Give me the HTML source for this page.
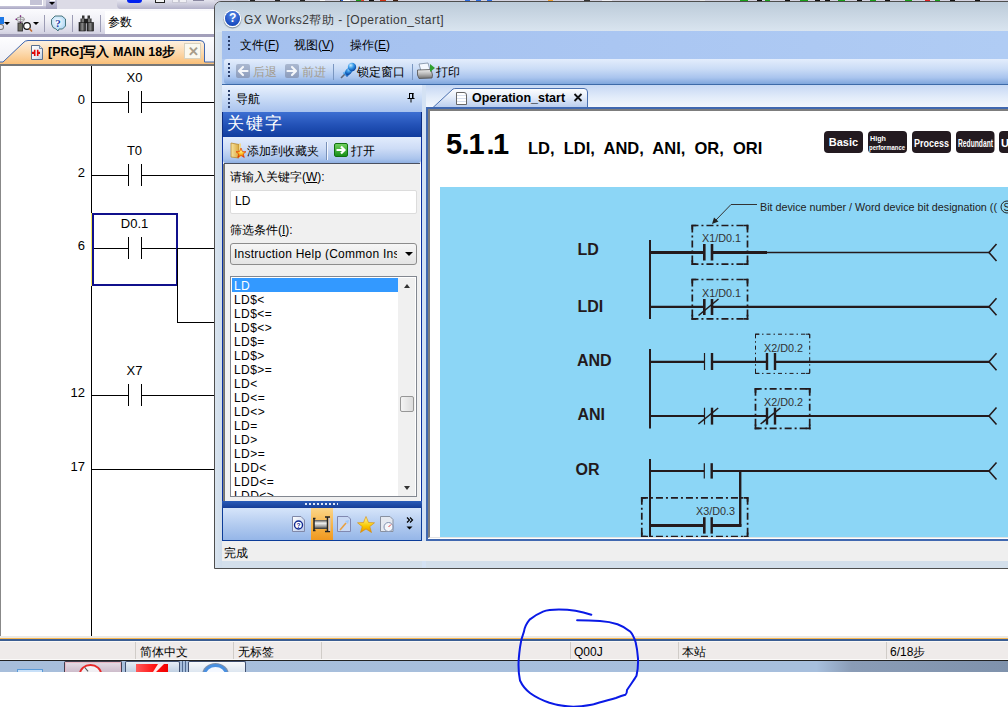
<!DOCTYPE html>
<html><head><meta charset="utf-8">
<style>
*{box-sizing:border-box;margin:0;padding:0}
html,body{width:1008px;height:707px;overflow:hidden;background:#fff;font-family:"Liberation Sans",sans-serif;font-size:12px;color:#000}
.a{position:absolute}
.t{position:absolute;white-space:nowrap;line-height:1}
</style></head><body>
<!-- ===== MAIN APP ===== -->
<!-- top toolbar row -->
<div class="a" style="left:0;top:0;width:1008px;height:9px;background:#dcdbe6"></div>
<div class="a" style="left:0;top:0;width:43px;height:6px;background:#fff"></div>
<div class="a" style="left:30px;top:0;width:12px;height:5px;background:#c4c3d6"></div>
<div class="a" style="left:0;top:6px;width:57px;height:3px;background:linear-gradient(#c8c6da,#a8a6c2)"></div>
<div class="a" style="left:46px;top:0;width:11px;height:8.5px;background:linear-gradient(#c9c8dc,#a09eba)"></div>
<div class="a" style="left:50px;top:0;width:5px;height:1px;background:#fff"></div>
<div class="a" style="left:49px;top:2px;width:0;height:0;border-left:3px solid transparent;border-right:3px solid transparent;border-top:3px solid #000"></div>
<div class="a" style="left:117px;top:0;width:120px;height:9px;background:linear-gradient(#e4e4ee,#b3b2c9);border-bottom-left-radius:4px"></div>
<div class="a" style="left:127px;top:0;width:15px;height:3px;background:#0020f0;border-radius:0 0 3px 3px"></div>
<div class="a" style="left:155px;top:0;width:10px;height:3px;border:1.5px solid #222;border-top:none;background:#f4f4f4"></div>
<div class="a" style="left:172px;top:0;width:7px;height:3px;background:#f0f0f4;border:1px solid #c8c8d4;border-top:none"></div>
<div class="a" style="left:179px;top:0;width:8px;height:3px;background:#f0f0f4;border:1px solid #c8c8d4;border-top:none"></div>
<div class="a" style="left:193px;top:0;width:11px;height:1px;background:#8a88a0"></div>
<!-- second toolbar -->
<div class="a" style="left:0;top:9px;width:1008px;height:28px;background:linear-gradient(#fbfbfe 0%,#f0f0f6 40%,#d9d8e6 80%,#c8c7da 100%)"></div>
<div class="a" style="left:0;top:34px;width:1008px;height:3px;background:#a29fba"></div>
<div class="a" style="left:0;top:17px;width:4px;height:7px;background:#1e78e6"></div>
<div class="a" style="left:0;top:24px;width:4px;height:6px;border-radius:0 4px 4px 0;border:1px solid #777;border-left:none"></div>
<div class="a" style="left:4px;top:22px;width:0;height:0;border-left:3px solid transparent;border-right:3px solid transparent;border-top:3px solid #000"></div>
<svg class="a" style="left:15px;top:15px" width="18" height="17">
<ellipse cx="5.5" cy="4.3" rx="4" ry="2.3" fill="none" stroke="#909090" stroke-width="0.9"/>
<path d="M1.5,4.3 H9.5 M5.5,1 V7.5" stroke="#909090" stroke-width="0.8"/>
<circle cx="5.5" cy="1" r="0.8" fill="#700070"/><circle cx="5.5" cy="7.5" r="0.8" fill="#700070"/><circle cx="1.2" cy="4.3" r="0.8" fill="#700070"/>
<rect x="3" y="8" width="4.5" height="8" fill="#6c6c60" stroke="#333" stroke-width="0.9"/>
<circle cx="12" cy="11" r="3.3" fill="#fff" stroke="#111" stroke-width="1.2"/>
<line x1="14.3" y1="13.5" x2="17" y2="16.5" stroke="#c06a30" stroke-width="1.6"/>
</svg>



<div class="a" style="left:33px;top:22px;width:0;height:0;border-left:3px solid transparent;border-right:3px solid transparent;border-top:3px solid #000"></div>
<div class="a" style="left:44px;top:15px;width:1px;height:17px;background:#9c9cb4"></div>
<svg class="a" style="left:50px;top:14px" width="18" height="18">
<defs><radialGradient id="hbg" cx="0.45" cy="0.4" r="0.6"><stop offset="0" stop-color="#ffffff"/><stop offset="1" stop-color="#a8d4f4"/></radialGradient></defs>
<path d="M5,2 H12 L15.5,5 V12 L12.5,15 L9,15 L8,17 L6,15 L3,13.5 L1.5,10 V5.5 Z" fill="url(#hbg)" stroke="#3a6a70" stroke-width="0.9"/>
<text x="5.3" y="12.5" font-size="11" font-weight="bold" fill="#1a3ca8" font-family="Liberation Serif">?</text>
</svg>
<div class="a" style="left:72px;top:15px;width:1px;height:17px;background:#9c9cb4"></div>
<svg class="a" style="left:78px;top:15px" width="18" height="17">
<defs><linearGradient id="bng" x1="0" y1="0" x2="1" y2="0"><stop offset="0" stop-color="#202020"/><stop offset="0.5" stop-color="#8a8a8a"/><stop offset="1" stop-color="#202020"/></linearGradient></defs>
<rect x="4" y="0.5" width="2.5" height="4" fill="#333"/><rect x="9.5" y="0.5" width="2.5" height="4" fill="#333"/>
<rect x="2.5" y="3.5" width="5" height="5" fill="url(#bng)"/><rect x="8.5" y="3.5" width="5" height="5" fill="url(#bng)"/>
<rect x="6" y="4" width="4" height="4" fill="#222"/>
<rect x="1" y="7.5" width="6.5" height="8.5" fill="url(#bng)" stroke="#111" stroke-width="0.6"/>
<rect x="9" y="7.5" width="6.5" height="8.5" fill="url(#bng)" stroke="#111" stroke-width="0.6"/>
</svg>
<div class="a" style="left:100px;top:15px;width:1px;height:17px;background:#9c9cb4"></div>
<div class="a" style="left:105px;top:11px;width:110px;height:23px;background:#fff"></div>
<div class="t" style="left:108px;top:16px;font-size:12px">参数</div>
<!-- tab row -->
<div class="a" style="left:0;top:37px;width:1008px;height:28px;background:linear-gradient(#fdfdff,#eeeef4)"></div>
<svg class="a" style="left:0;top:38px" width="214" height="28">
 <defs><linearGradient id="tg" x1="0" y1="0" x2="0" y2="1"><stop offset="0" stop-color="#fdf1e2"/><stop offset="0.5" stop-color="#fcd9ad"/><stop offset="1" stop-color="#f9bd74"/></linearGradient></defs>
 <path d="M0,27 L0,24 L3,24 L23,5 Q25,2.5 28,2.5 L200,2.5 Q204,2.5 204.5,6 L204.5,24 L214,24 L214,27 Z" fill="url(#tg)"/>
 <path d="M0,24 L3,24 L23,5 Q25,2.5 28,2.5 L200,2.5 Q204,2.5 204.5,6 L204.5,24 L214,24" fill="none" stroke="#3d66b0" stroke-width="1"/>
</svg>
<svg class="a" style="left:30px;top:44px" width="15" height="17">
<defs><linearGradient id="pgi" x1="0" y1="0" x2="1" y2="1"><stop offset="0" stop-color="#ffffff"/><stop offset="0.6" stop-color="#e8eef6"/><stop offset="1" stop-color="#b8c8dc"/></linearGradient></defs>
<path d="M1.5,1.5 H9.5 L12.5,4.5 V15.5 H1.5 Z" fill="url(#pgi)" stroke="#5a7090" stroke-width="1"/>
<path d="M9.5,1.5 V4.5 H12.5" fill="#dde6f0" stroke="#5a7090" stroke-width="0.8"/>
<path d="M2,8.8 H5 M10,8.8 H7.5" stroke="#e00808" stroke-width="2.2"/>
<path d="M4.7,5.8 V12 M7.7,5.8 V12" stroke="#e00808" stroke-width="1.6"/>
</svg>
<div class="t" style="left:48px;top:46px;font-size:12.5px;font-weight:bold">[PRG]写入 MAIN 18步</div>
<div class="a" style="left:184px;top:43px;width:17px;height:16px;background:#fbf9ef;border:1px solid #d8d2bf"></div>
<div class="t" style="left:187.5px;top:45px;font-size:13px;color:#a89d8a;font-weight:bold">✕</div>
<div class="a" style="left:0;top:64px;width:1008px;height:2px;background:#777"></div>
<!-- ladder area -->
<div class="a" style="left:0;top:66px;width:1px;height:570px;background:#888"></div>
<div class="a" style="left:91px;top:66px;width:1px;height:570px;background:#000"></div>
<div class="a" style="left:92px;top:102px;width:36px;height:1px;background:#000"></div>
<div class="a" style="left:128px;top:91px;width:1px;height:22px;background:#000"></div>
<div class="a" style="left:141px;top:91px;width:1px;height:22px;background:#000"></div>
<div class="a" style="left:142px;top:102px;width:73px;height:1px;background:#000"></div>
<div class="t" style="left:85px;top:93px;font-size:13px;transform:translateX(-100%)">0</div>
<div class="t" style="left:134.5px;top:71px;font-size:13px;transform:translateX(-50%)">X0</div>
<div class="a" style="left:92px;top:175px;width:36px;height:1px;background:#000"></div>
<div class="a" style="left:128px;top:164px;width:1px;height:22px;background:#000"></div>
<div class="a" style="left:141px;top:164px;width:1px;height:22px;background:#000"></div>
<div class="a" style="left:142px;top:175px;width:73px;height:1px;background:#000"></div>
<div class="t" style="left:85px;top:166px;font-size:13px;transform:translateX(-100%)">2</div>
<div class="t" style="left:134.5px;top:144px;font-size:13px;transform:translateX(-50%)">T0</div>
<div class="a" style="left:92px;top:248px;width:36px;height:1px;background:#000"></div>
<div class="a" style="left:128px;top:237px;width:1px;height:22px;background:#000"></div>
<div class="a" style="left:141px;top:237px;width:1px;height:22px;background:#000"></div>
<div class="a" style="left:142px;top:248px;width:73px;height:1px;background:#000"></div>
<div class="t" style="left:85px;top:239px;font-size:13px;transform:translateX(-100%)">6</div>
<div class="t" style="left:134.5px;top:217px;font-size:13px;transform:translateX(-50%)">D0.1</div>
<div class="a" style="left:92px;top:395px;width:36px;height:1px;background:#000"></div>
<div class="a" style="left:128px;top:384px;width:1px;height:22px;background:#000"></div>
<div class="a" style="left:141px;top:384px;width:1px;height:22px;background:#000"></div>
<div class="a" style="left:142px;top:395px;width:73px;height:1px;background:#000"></div>
<div class="t" style="left:85px;top:386px;font-size:13px;transform:translateX(-100%)">12</div>
<div class="t" style="left:134.5px;top:364px;font-size:13px;transform:translateX(-50%)">X7</div>
<div class="a" style="left:92px;top:469px;width:123px;height:1px;background:#000"></div>
<div class="t" style="left:85px;top:460px;font-size:13px;transform:translateX(-100%)">17</div>
<div class="a" style="left:91px;top:213px;width:1px;height:73px;background:#f4e860"></div>
<div class="a" style="left:92px;top:213px;width:86px;height:73px;border:2px solid #10108c"></div>
<div class="a" style="left:177px;top:248px;width:1px;height:75px;background:#000"></div>
<div class="a" style="left:177px;top:322px;width:38px;height:1px;background:#000"></div>
<!--LADDER_END-->
<!-- ===== STATUS BAR / TASKBAR ===== -->
<div class="a" style="left:0;top:636px;width:1008px;height:2px;background:#eceae6"></div>
<div class="a" style="left:0;top:638px;width:1008px;height:1px;background:#f6b652"></div>
<div class="a" style="left:0;top:639px;width:1008px;height:2px;background:#3c5e92"></div>
<div class="a" style="left:0;top:641px;width:1008px;height:1px;background:#faf8f6"></div>
<div class="a" style="left:0;top:642px;width:1008px;height:17px;background:#efebea"></div>
<div class="a" style="left:0;top:659px;width:1008px;height:1px;background:#fbfaf9"></div>
<div class="a" style="left:0;top:660px;width:1008px;height:1px;background:#222"></div>
<div class="a" style="left:135px;top:642px;width:1px;height:17px;background:#d0ccc8"></div>
<div class="a" style="left:233px;top:642px;width:1px;height:17px;background:#d0ccc8"></div>
<div class="a" style="left:321px;top:642px;width:1px;height:17px;background:#d0ccc8"></div>
<div class="a" style="left:570px;top:642px;width:1px;height:17px;background:#d0ccc8"></div>
<div class="a" style="left:678px;top:642px;width:1px;height:17px;background:#d0ccc8"></div>
<div class="a" style="left:886px;top:642px;width:1px;height:17px;background:#d0ccc8"></div>
<div class="t" style="left:140px;top:646px;font-size:12px">简体中文</div>
<div class="t" style="left:238px;top:646px;font-size:12px">无标签</div>
<div class="t" style="left:574px;top:646px;font-size:12px">Q00J</div>
<div class="t" style="left:682px;top:646px;font-size:12px">本站</div>
<div class="t" style="left:890px;top:646px;font-size:12px">6/18步</div>
<div class="a" style="left:0;top:661px;width:1008px;height:11px;background:linear-gradient(90deg,#a7bedb 0%,#a7bfdd 81%,#8a9cb6 84.5%,#7f92ac 100%)"></div>
<div class="a" style="left:17px;top:669px;width:26px;height:3px;background:#c8e0f8;border:1px solid #5a9ad8;border-bottom:none"></div>
<div class="a" style="left:64px;top:661px;width:58px;height:11px;background:linear-gradient(#e4dee6,#cdbccb);border:1px solid #404050;border-bottom:none;border-radius:2px 2px 0 0"></div>
<div class="a" style="left:65px;top:662px;width:56px;height:10px;border:1px solid #e8b8c4;border-bottom:none"></div>
<div class="a" style="left:79px;top:664px;width:23px;height:20px;border:2px solid #e82828;border-radius:50%;background:linear-gradient(#f8f8fa,#e0dce4)"></div>
<div class="a" style="left:86px;top:667px;width:1px;height:5px;background:#555;transform:rotate(-40deg)"></div>
<div class="a" style="left:182px;top:661px;width:1px;height:11px;background:#506a90"></div>
<div class="a" style="left:125px;top:661px;width:55px;height:11px;background:linear-gradient(#e8eef6,#c0d0e2);border:1px solid #405070;border-bottom:none;border-radius:2px 2px 0 0"></div>
<div class="a" style="left:136px;top:664px;width:32px;height:8px;background:linear-gradient(90deg,#ff5a5a,#ff1010 60%,#f00000)"></div>
<svg class="a" style="left:150px;top:664px" width="14" height="8"><path d="M8,0 L14,0 L14,0 L6,8 L3,8 Z" fill="#fff" opacity="0.9"/></svg>
<div class="a" style="left:185px;top:661px;width:1px;height:11px;background:#506a90"></div>
<div class="a" style="left:188px;top:661px;width:58px;height:11px;background:linear-gradient(#f8fafc,#dde6f0);border:1px solid #405070;border-bottom:none;border-radius:2px 2px 0 0"></div>
<div class="a" style="left:203px;top:664px;width:25px;height:22px;border:3px solid #4a90e0;border-radius:50%;background:#f4f8ff;box-shadow:0 0 0 1px #8090a8"></div>
<div class="a" style="left:0;top:672px;width:1008px;height:35px;background:#fff"></div>

<!--STATUS_END-->
<div class="a" style="left:214px;top:0;width:794px;height:1px;background:#d4d3e0"></div>
<div class="a" style="left:236px;top:0;width:12px;height:1px;background:#c8c8d4"></div>
<div class="a" style="left:250px;top:0;width:5px;height:1px;background:#222"></div>
<div class="a" style="left:275px;top:0;width:5px;height:1px;background:#222"></div>
<div class="a" style="left:300px;top:0;width:5px;height:1px;background:#222"></div>
<div class="a" style="left:320px;top:0;width:5px;height:1px;background:#f8f8f8"></div>
<div class="a" style="left:362px;top:0;width:2px;height:1px;background:#e04020"></div>
<div class="a" style="left:340px;top:0;width:10px;height:1px;background:#fff"></div>
<div class="a" style="left:340px;top:0;width:2px;height:1px;background:#333"></div>
<div class="a" style="left:360px;top:0;width:2px;height:1px;background:#333"></div>
<div class="a" style="left:341px;top:0;width:2px;height:1px;background:#2a62d8"></div>
<div class="a" style="left:360px;top:0;width:2px;height:1px;background:#e04040"></div>
<div class="a" style="left:356px;top:0;width:5px;height:1px;background:#18a018"></div>
<div class="a" style="left:369px;top:0;width:5px;height:1px;background:#111"></div>
<div class="a" style="left:380px;top:0;width:6px;height:1px;background:#d03010"></div>
<div class="a" style="left:393px;top:0;width:5px;height:1px;background:#402010"></div>
<div class="a" style="left:465px;top:0;width:5px;height:1px;background:#2a6ae0"></div>
<div class="a" style="left:476px;top:0;width:5px;height:1px;background:#2a6ae0"></div>
<div class="a" style="left:487px;top:0;width:5px;height:1px;background:#2a6ae0"></div>
<div class="a" style="left:548px;top:0;width:5px;height:1px;background:#f0a030"></div>
<div class="a" style="left:584px;top:0;width:6px;height:1px;background:#333"></div>
<div class="a" style="left:602px;top:0;width:10px;height:1px;background:#f0f0f4"></div>
<div class="a" style="left:700px;top:0;width:5px;height:1px;background:#e8e8e8"></div>
<div class="a" style="left:740px;top:0;width:8px;height:1px;background:#18a018"></div>
<div class="a" style="left:757px;top:0;width:5px;height:1px;background:#111"></div>
<div class="a" style="left:765px;top:0;width:5px;height:1px;background:#18a018"></div>
<div class="a" style="left:785px;top:0;width:5px;height:1px;background:#111"></div>
<div class="a" style="left:800px;top:0;width:8px;height:1px;background:#18a018"></div>
<div class="a" style="left:815px;top:0;width:5px;height:1px;background:#111"></div>
<div class="a" style="left:825px;top:0;width:5px;height:1px;background:#111"></div>
<div class="a" style="left:838px;top:0;width:7px;height:1px;background:#18a018"></div>
<div class="a" style="left:857px;top:0;width:5px;height:1px;background:#111"></div>
<div class="a" style="left:870px;top:0;width:6px;height:1px;background:#18a018"></div>
<div class="a" style="left:885px;top:0;width:5px;height:1px;background:#111"></div>
<div class="a" style="left:905px;top:0;width:7px;height:1px;background:#18a018"></div>
<div class="a" style="left:925px;top:0;width:5px;height:1px;background:#e02020"></div>
<div class="a" style="left:935px;top:0;width:5px;height:1px;background:#18a018"></div>
<div class="a" style="left:950px;top:0;width:5px;height:1px;background:#111"></div>
<div class="a" style="left:975px;top:0;width:5px;height:1px;background:#111"></div>
<!-- ===== HELP WINDOW ===== -->
<div class="a" style="left:214px;top:1px;width:800px;height:568px;border:1px solid #4e4e4e;border-top-left-radius:7px;background:#d3dfeb;overflow:hidden">
 <div class="a" style="left:0;top:0;width:800px;height:30px;background:linear-gradient(#bccbd9,#dae5f0)"></div>
 <div class="a" style="left:0;top:30px;width:7px;height:540px;background:linear-gradient(90deg,#d9e4ef,#cfdcea)"></div>
</div>
<!-- title -->
<div class="a" style="left:225px;top:11px;width:15px;height:15px;border-radius:50%;background:radial-gradient(circle at 50% 30%,#5a8ae8,#1a4cc0 70%);box-shadow:0 0 0 1.2px #fff,0 1px 1px 1.5px #8090a0"></div>
<div class="t" style="left:229px;top:12px;font-size:12px;font-weight:bold;color:#fff">?</div>
<div class="t" style="left:244px;top:14px;font-size:12px;color:#3a3a3a;letter-spacing:0.48px">GX Works2帮助 - [Operation_start]</div>
<!-- menu bar -->
<div class="a" style="left:222px;top:31px;width:786px;height:28px;background:linear-gradient(90deg,#a4c0ee,#aac6f2 50%,#b0ccf4)"></div>
<div class="a" style="left:228px;top:36px;width:2px;height:14px;background:repeating-linear-gradient(#2a3e6a 0 2px,transparent 2px 4px)"></div>
<div class="t" style="left:240px;top:39px;font-size:12px">文件(<u>F</u>)</div>
<div class="t" style="left:294px;top:39px;font-size:12px">视图(<u>V</u>)</div>
<div class="t" style="left:350px;top:39px;font-size:12px">操作(<u>E</u>)</div>
<!-- toolbar -->
<div class="a" style="left:222px;top:59px;width:786px;height:25px;background:#b0cbf3"></div>
<div class="a" style="left:224px;top:59px;width:784px;height:25px;border-radius:3px 0 0 3px;background:linear-gradient(#e3edfc 0%,#cadcf6 40%,#a9c4ee 75%,#7fa6dc 100%)"></div>
<div class="a" style="left:222px;top:84px;width:786px;height:1px;background:#3d6aa8"></div>
<div class="a" style="left:228px;top:63px;width:2px;height:15px;background:repeating-linear-gradient(#2a3e6a 0 2px,transparent 2px 4px)"></div>
<div class="a" style="left:236px;top:64px;width:14px;height:14px;background:linear-gradient(#aab8d0,#8c9cbc);border-radius:2px"></div>
<svg class="a" style="left:236px;top:64px" width="14" height="14"><path d="M11.5,7 H3.5 M7,3 L3,7 L7,11" stroke="#f4f6fa" stroke-width="2.2" fill="none" stroke-linecap="round" stroke-linejoin="round"/></svg>
<div class="t" style="left:253px;top:66px;font-size:12px;color:#a49c8e">后退</div>
<div class="a" style="left:285px;top:64px;width:14px;height:14px;background:linear-gradient(#aab8d0,#8c9cbc);border-radius:2px"></div>
<svg class="a" style="left:285px;top:64px" width="14" height="14"><path d="M2.5,7 H10.5 M7,3 L11,7 L7,11" stroke="#f4f6fa" stroke-width="2.2" fill="none" stroke-linecap="round" stroke-linejoin="round"/></svg>
<div class="t" style="left:302px;top:66px;font-size:12px;color:#a49c8e">前进</div>
<div class="a" style="left:333px;top:64px;width:1px;height:16px;background:#7a96c0"></div>
<svg class="a" style="left:339px;top:62px" width="18" height="18">
<defs><radialGradient id="pg" cx="0.35" cy="0.3" r="0.7"><stop offset="0" stop-color="#c8ecff"/><stop offset="0.5" stop-color="#3a9ae8"/><stop offset="1" stop-color="#0a4aa8"/></radialGradient></defs>
<line x1="2" y1="16" x2="6" y2="12" stroke="#606878" stroke-width="1.6"/>
<path d="M4,11 L8,7 L12,11 L8,15 Z" fill="url(#pg)"/>
<ellipse cx="10" cy="9" rx="3" ry="4.5" transform="rotate(45 10 9)" fill="url(#pg)"/>
<circle cx="13" cy="5" r="4.2" fill="url(#pg)"/>
</svg>
<div class="t" style="left:357px;top:66px;font-size:12px">锁定窗口</div>
<div class="a" style="left:412px;top:64px;width:1px;height:16px;background:#7a96c0"></div>
<svg class="a" style="left:416px;top:62px" width="20" height="18">
<defs><linearGradient id="prg" x1="0" y1="0" x2="0" y2="1"><stop offset="0" stop-color="#f0f0f0"/><stop offset="0.5" stop-color="#b8b8b8"/><stop offset="1" stop-color="#707070"/></linearGradient></defs>
<path d="M3,2 L12,1 L14,8 L5,9 Z" fill="#f4f8ff" stroke="#7a8aa0" stroke-width="0.8"/>
<path d="M1.5,8 L15,7.5 L16.5,13 L16,16 L3,16.5 L1.5,13 Z" fill="url(#prg)" stroke="#505050" stroke-width="0.8"/>
<path d="M14,2 L19,6 L14,10 Z" fill="#30a030"/>
</svg>
<div class="t" style="left:436px;top:66px;font-size:12px">打印</div>
<!-- nav header -->
<div class="a" style="left:222px;top:85px;width:200px;height:27px;background:linear-gradient(#e9f1fd,#c9dbf6 50%,#a9c3ee)"></div>
<div class="a" style="left:228px;top:90px;width:2px;height:18px;background:repeating-linear-gradient(#2a3e6a 0 2px,transparent 2px 4px)"></div>
<div class="t" style="left:236px;top:93px;font-size:12px">导航</div>
<svg class="a" style="left:406px;top:92px" width="10" height="11"><path d="M3,1.5 H7.5 M3.5,1 V6 M6.5,1 V6 M1.5,6.5 H8.5 M5,6.5 V10.5" stroke="#000" stroke-width="1" fill="none"/><rect x="6" y="1" width="1.5" height="5" fill="#000"/></svg>
<div class="a" style="left:422px;top:85px;width:4px;height:483px;background:#d4e2f4"></div>
<!-- doc tab strip -->
<div class="a" style="left:426px;top:85px;width:582px;height:22px;background:linear-gradient(#c6d8f4,#e4edfa 60%,#f3f7fd)"></div>
<svg class="a" style="left:426px;top:85px" width="582" height="24">
 <defs><linearGradient id="dtg" x1="0" y1="0" x2="0" y2="1"><stop offset="0" stop-color="#ffffff"/><stop offset="0.45" stop-color="#e4ecf9"/><stop offset="1" stop-color="#b9cdee"/></linearGradient></defs>
 <path d="M7,22.5 L27,4 Q28,3.5 30,3.5 L158,3.5 Q161.5,3.5 161.5,7 L161.5,22.5" fill="url(#dtg)" stroke="#4a70b0" stroke-width="1"/>
</svg>
<div class="a" style="left:456px;top:92px;width:11px;height:13px;background:repeating-linear-gradient(#fff 0 2px,#d8e0ee 2px 3px);border:1px solid #666;border-radius:0 3px 0 0"></div>
<div class="t" style="left:472px;top:92px;font-size:12.5px;font-weight:bold">Operation_start</div>
<svg class="a" style="left:573px;top:93px" width="10" height="9"><path d="M1.5,1 L8.5,8 M8.5,1 L1.5,8" stroke="#111" stroke-width="1.8"/></svg>
<!-- doc pane -->
<div class="a" style="left:426px;top:107px;width:582px;height:434px;border:2px solid #4068b0;border-right:none;background:#fff"></div>
<div class="a" style="left:428px;top:109px;width:580px;height:429px;border-left:2px solid #7d7d7d;border-top:2px solid #7d7d7d;border-bottom:1px solid #e4e4e4;background:#fff"></div>
<!-- status "完成" -->
<div class="a" style="left:222px;top:541px;width:786px;height:20px;background:#efefef"></div>
<div class="t" style="left:224px;top:547px;font-size:12px">完成</div>
<!-- nav panel -->
<div class="a" style="left:222px;top:112px;width:200px;height:25px;background:linear-gradient(#3d6fd2,#2453b8 50%,#103c9e);border-left:1px solid #0c2c80;border-right:1px solid #0c2c80"></div>
<div class="t" style="left:227px;top:115px;font-size:17px;color:#fff;letter-spacing:2px">关键字</div>
<div class="a" style="left:222px;top:137px;width:200px;height:27px;background:#f0f0f0;border-left:1px solid #0a30a0;border-right:1px solid #0a30a0"></div>
<div class="a" style="left:223px;top:137px;width:198px;height:26px;background:linear-gradient(#e2ecfc,#cddcf6 45%,#a9c3ec 85%,#8fb0e2);border-radius:0 0 3px 3px"></div>
<div class="a" style="left:224px;top:163px;width:196px;height:1px;background:#4a5060"></div>
<svg class="a" style="left:230px;top:142px" width="18" height="18">
<defs><linearGradient id="fdg" x1="0" y1="0" x2="1" y2="0"><stop offset="0" stop-color="#f8e4a0"/><stop offset="1" stop-color="#d8a840"/></linearGradient>
<radialGradient id="rst" cx="0.5" cy="0.4" r="0.6"><stop offset="0" stop-color="#fff080"/><stop offset="0.6" stop-color="#f8a000"/><stop offset="1" stop-color="#e02000"/></radialGradient></defs>
<path d="M1,1 L9,2.5 V16 L1,15 Z" fill="url(#fdg)" stroke="#b88830" stroke-width="0.8"/>
<rect x="9" y="1.5" width="2" height="14" fill="#f0d890"/>
<path d="M11,6 L12.5,9.5 L16,9.7 L13.3,12 L14.3,15.5 L11,13.5 L7.7,15.5 L8.7,12 L6,9.7 L9.5,9.5 Z" fill="url(#rst)" stroke="#e03000" stroke-width="0.6"/>
</svg>
<div class="t" style="left:247px;top:145px;font-size:12px">添加到收藏夹</div>
<div class="a" style="left:326px;top:142px;width:1px;height:18px;background:#7890b8"></div>
<div class="a" style="left:327px;top:142px;width:1px;height:18px;background:#f4f8ff"></div>
<div class="a" style="left:334px;top:143px;width:14px;height:14px;background:linear-gradient(#70d060,#189018);border-radius:2px;border:1px solid #107010"></div>
<svg class="a" style="left:334px;top:143px" width="14" height="14"><path d="M2.5,7 H10 M7,3.5 L10.5,7 L7,10.5" stroke="#fff" stroke-width="2.2" fill="none"/></svg>
<div class="t" style="left:351px;top:145px;font-size:12px">打开</div>






<div class="a" style="left:222px;top:164px;width:200px;height:337px;background:#f0f0f0;border-left:1px solid #0a30a0;border-right:1px solid #0a30a0"></div>
<div class="a" style="left:223px;top:164px;width:2px;height:337px;background:linear-gradient(90deg,#8a8a80,#6a6a6a)"></div>
<div class="a" style="left:420px;top:164px;width:1px;height:337px;background:#fff"></div>
<div class="t" style="left:230px;top:171px;font-size:12px">请输入关键字(<u>W</u>):</div>
<div class="a" style="left:230px;top:190px;width:187px;height:24px;background:#fff;border:1px solid #dcdcdc;border-radius:2px"></div>
<div class="t" style="left:235px;top:195px;font-size:12px">LD</div>
<div class="t" style="left:230px;top:224px;font-size:12px">筛选条件(<u>I</u>):</div>
<div class="a" style="left:230px;top:243px;width:187px;height:22px;background:linear-gradient(#f6f6f6,#e4e4e4);border:1px solid #8c8c8c;border-radius:3px"></div>
<div class="t" style="left:234px;top:248px;font-size:12px;width:163px;overflow:hidden;letter-spacing:0.25px">Instruction Help (Common Ins</div>
<div class="a" style="left:405px;top:252px;width:0;height:0;border-left:4px solid transparent;border-right:4px solid transparent;border-top:4px solid #000"></div>
<div class="a" style="left:230px;top:276px;width:187px;height:221px;background:#fff;border:1px solid #828790;overflow:hidden">
 <div class="a" style="left:167px;top:1px;width:17px;height:218px;background:#f0f0f0"></div>
 <div class="a" style="left:173px;top:7px;width:0;height:0;border-left:3px solid transparent;border-right:3px solid transparent;border-bottom:4px solid #333"></div>
 <div class="a" style="left:173px;top:209px;width:0;height:0;border-left:3px solid transparent;border-right:3px solid transparent;border-top:4px solid #333"></div>
 <div class="a" style="left:169px;top:119px;width:14px;height:16px;background:linear-gradient(90deg,#f4f4f4,#dcdcdc);border:1px solid #979797;border-radius:2px"></div>
 <div class="a" style="left:1px;top:1px;width:166px;height:14px;background:#3399ff"></div>
 <div style="position:absolute;left:3px;top:2px;font-size:12px;line-height:14px;white-space:pre;letter-spacing:0.45px"><span style="color:#fff">LD</span>
LD$&lt;
LD$&lt;=
LD$&lt;&gt;
LD$=
LD$&gt;
LD$&gt;=
LD&lt;
LD&lt;=
LD&lt;&gt;
LD=
LD&gt;
LD&gt;=
LDD&lt;
LDD&lt;=
LDD&lt;&gt;</div>
</div>
<div class="a" style="left:222px;top:501px;width:200px;height:7px;background:linear-gradient(#2a5cb8,#163e98)"></div>
<div class="a" style="left:305px;top:503px;width:33px;height:2px;background:repeating-linear-gradient(90deg,#e0e8f8 0 2px,transparent 2px 4px)"></div>
<div class="a" style="left:222px;top:508px;width:200px;height:33px;background:linear-gradient(#d6e5fa,#b4ccf0 50%,#95b6e8);border:1px solid #0c3c98;border-top:none"></div>
<div class="a" style="left:311px;top:508px;width:22px;height:32px;background:linear-gradient(#fbd68a,#f6b040 60%,#f09820)"></div>
<svg class="a" style="left:288px;top:512px" width="132" height="24">
<defs>
<linearGradient id="pgx" x1="0" y1="0" x2="1" y2="1"><stop offset="0" stop-color="#ffffff"/><stop offset="1" stop-color="#b8c8e8"/></linearGradient>
<linearGradient id="cyl" x1="0" y1="0" x2="0" y2="1"><stop offset="0" stop-color="#505050"/><stop offset="0.35" stop-color="#f4f4f4"/><stop offset="0.7" stop-color="#a0a0a0"/><stop offset="1" stop-color="#303030"/></linearGradient>
<linearGradient id="stg" x1="0" y1="0" x2="0" y2="1"><stop offset="0" stop-color="#fff6a0"/><stop offset="0.6" stop-color="#f8c800"/><stop offset="1" stop-color="#e89000"/></linearGradient>
</defs>
<path d="M4.5,4.5 H13 L16.5,8 V19.5 H4.5 Z" fill="url(#pgx)" stroke="#8088a8" stroke-width="1"/>
<circle cx="10.5" cy="13" r="4" fill="#fff" stroke="#102890" stroke-width="1.4"/>
<text x="8.6" y="15.6" font-size="6.5" font-weight="bold" fill="#102890" font-family="Liberation Sans">?</text>
<rect x="26" y="8" width="13" height="9" fill="url(#cyl)"/>
<path d="M26,6.5 V18.5 M39.5,5 V19.5 M37,5 H42 M37,19.5 H42 M25,6.5 h2.5 M25,18.5 h2.5" stroke="#222" stroke-width="1.5" fill="none"/>
<rect x="40.5" y="6" width="2" height="13" fill="#c8c8d8"/>
<path d="M49.5,4.5 H60 L62.5,7 V19.5 H49.5 Z" fill="#c8d8f4" stroke="#8088b0" stroke-width="1"/>
<line x1="52" y1="18" x2="58" y2="11" stroke="#e8a040" stroke-width="1.6"/>
<path d="M57,9 L61,8 L60,12 Z" fill="#a0c8f8"/>
<path d="M78,4.5 L80.5,10.5 L86.5,10.8 L81.8,14.6 L83.5,20.5 L78,17 L72.5,20.5 L74.2,14.6 L69.5,10.8 L75.5,10.5 Z" fill="url(#stg)" stroke="#d88800" stroke-width="0.6"/>
<path d="M92.5,4.5 H102 L105,7.5 V19.5 H92.5 Z" fill="#e4e8f0" stroke="#8890a0" stroke-width="1"/>
<circle cx="100.5" cy="15" r="4.5" fill="#f4f6fa" stroke="#8090b0" stroke-width="1"/>
<line x1="100.5" y1="15" x2="103" y2="12.5" stroke="#e04040" stroke-width="1"/>
<path d="M119,5.5 L121.5,8 L119,10.5 M122,5.5 L124.5,8 L122,10.5" stroke="#000" stroke-width="1.2" fill="none"/>
<path d="M118.5,14.5 H124.5 L121.5,17.5 Z" fill="#000"/>
</svg>
<!--NAV_END-->

<!--DOC_START-->
<svg class="a" style="left:430px;top:111px" width="578" height="426" viewBox="430 111 578 426" font-family="Liberation Sans, sans-serif"><rect x="440" y="187" width="568" height="350" fill="#8cd6f6" />
<text x="446 461.5 468.5 486.5 493" y="154" font-size="29" font-weight="bold" fill="#000">5.1.1</text>
<text x="528" y="154" font-size="16.5" font-weight="bold" fill="#000" id="h2">LD,&#160; LDI,&#160; AND,&#160; ANI,&#160; OR,&#160; ORI</text>
<rect x="824" y="131" width="39" height="22" rx="4" fill="#231a20"/>
<rect x="868" y="131" width="39" height="22" rx="4" fill="#231a20"/>
<rect x="912" y="131" width="39" height="22" rx="4" fill="#231a20"/>
<rect x="956" y="131" width="38.5" height="22" rx="4" fill="#231a20"/>
<rect x="999" y="131" width="39" height="22" rx="4" fill="#231a20"/>
<text x="843.5" y="145.8" font-size="11" font-weight="bold" fill="#fff" text-anchor="middle">Basic</text>
<text x="870" y="141" font-size="8" font-weight="bold" fill="#fff" textLength="16" lengthAdjust="spacingAndGlyphs">High</text>
<text x="869" y="150" font-size="8" font-weight="bold" fill="#fff" textLength="36" lengthAdjust="spacingAndGlyphs">performance</text>
<text x="914" y="147" font-size="11" font-weight="bold" fill="#fff" textLength="35" lengthAdjust="spacingAndGlyphs">Process</text>
<text x="958" y="147" font-size="11" font-weight="bold" fill="#fff" textLength="35" lengthAdjust="spacingAndGlyphs">Redundant</text>
<text x="1001" y="147" font-size="11" font-weight="bold" fill="#fff" >Univ</text>
<text x="760" y="210.8" font-size="11.5" font-weight="normal" fill="#222" textLength="237" lengthAdjust="spacingAndGlyphs">Bit device number / Word device bit designation ((</text>
<circle cx="1007" cy="207" r="6" fill="none" stroke="#222" stroke-width="1"/>
<text x="1003.5" y="211" font-size="10" font-weight="normal" fill="#222" >S</text>
<polyline points="757,204.5 731,204.5 715,221" fill="none" stroke="#333" stroke-width="1"/>
<polygon points="712,224 714,217.5 718.5,221.5" fill="#222"/>
<text x="577.5" y="255" font-size="16" font-weight="bold" fill="#231a1c" >LD</text>
<text x="577.5" y="311.5" font-size="16" font-weight="bold" fill="#231a1c" >LDI</text>
<text x="577" y="366" font-size="16" font-weight="bold" fill="#231a1c" >AND</text>
<text x="577.5" y="419.5" font-size="16" font-weight="bold" fill="#231a1c" >ANI</text>
<text x="575.5" y="475" font-size="16" font-weight="bold" fill="#231a1c" >OR</text>
<line x1="650" y1="240" x2="650" y2="319" stroke="#231a1c" stroke-width="2" />
<line x1="650" y1="252.5" x2="704.3" y2="252.5" stroke="#231a1c" stroke-width="3" />
<line x1="712" y1="252.5" x2="767" y2="252.5" stroke="#231a1c" stroke-width="3" />
<line x1="767" y1="252.5" x2="989" y2="252.5" stroke="#231a1c" stroke-width="1.5" />
<polyline points="996.5,244.0 989,252.5 996.5,261.0" fill="none" stroke="#231a1c" stroke-width="1.6"/>
<line x1="704.3" y1="244" x2="704.3" y2="260.5" stroke="#231a1c" stroke-width="2.6" />
<line x1="712" y1="244" x2="712" y2="260.5" stroke="#231a1c" stroke-width="2.6" />
<line x1="691.4499999999999" y1="225.5" x2="748.35" y2="225.5" stroke="#231a1c" stroke-width="1.7" stroke-dasharray="7 3 2 3"/>
<line x1="692.3" y1="225.5" x2="692.3" y2="265.05" stroke="#231a1c" stroke-width="1.7" stroke-dasharray="7 3 2 3"/>
<line x1="747.5" y1="225.5" x2="747.5" y2="265.05" stroke="#231a1c" stroke-width="1.7" stroke-dasharray="7 3 2 3"/>
<line x1="691.4499999999999" y1="264.2" x2="748.35" y2="264.2" stroke="#231a1c" stroke-width="1.7" stroke-dasharray="7 3 2 3"/>
<polyline points="696.3,225.5 692.3,225.5 692.3,229.5" fill="none" stroke="#231a1c" stroke-width="1.7"/>
<polyline points="743.5,225.5 747.5,225.5 747.5,229.5" fill="none" stroke="#231a1c" stroke-width="1.7"/>
<polyline points="696.3,264.2 692.3,264.2 692.3,260.2" fill="none" stroke="#231a1c" stroke-width="1.7"/>
<polyline points="743.5,264.2 747.5,264.2 747.5,260.2" fill="none" stroke="#231a1c" stroke-width="1.7"/>
<text x="702" y="242" font-size="10.8" font-weight="normal" fill="#333" >X1/D0.1</text>
<line x1="650" y1="306.8" x2="704.3" y2="306.8" stroke="#231a1c" stroke-width="2.2" />
<line x1="712" y1="306.8" x2="989" y2="306.8" stroke="#231a1c" stroke-width="2.2" />
<polyline points="996.5,298.3 989,306.8 996.5,315.3" fill="none" stroke="#231a1c" stroke-width="1.6"/>
<line x1="704.3" y1="299" x2="704.3" y2="315" stroke="#231a1c" stroke-width="2.6" />
<line x1="712" y1="299" x2="712" y2="315" stroke="#231a1c" stroke-width="2.6" />
<line x1="698.5" y1="315.5" x2="718.5" y2="299" stroke="#231a1c" stroke-width="1.6" />
<line x1="691.4499999999999" y1="279.5" x2="748.35" y2="279.5" stroke="#231a1c" stroke-width="1.7" stroke-dasharray="7 3 2 3"/>
<line x1="692.3" y1="279.5" x2="692.3" y2="319.65000000000003" stroke="#231a1c" stroke-width="1.7" stroke-dasharray="7 3 2 3"/>
<line x1="747.5" y1="279.5" x2="747.5" y2="319.65000000000003" stroke="#231a1c" stroke-width="1.7" stroke-dasharray="7 3 2 3"/>
<line x1="691.4499999999999" y1="318.8" x2="748.35" y2="318.8" stroke="#231a1c" stroke-width="1.7" stroke-dasharray="7 3 2 3"/>
<polyline points="696.3,279.5 692.3,279.5 692.3,283.5" fill="none" stroke="#231a1c" stroke-width="1.7"/>
<polyline points="743.5,279.5 747.5,279.5 747.5,283.5" fill="none" stroke="#231a1c" stroke-width="1.7"/>
<polyline points="696.3,318.8 692.3,318.8 692.3,314.8" fill="none" stroke="#231a1c" stroke-width="1.7"/>
<polyline points="743.5,318.8 747.5,318.8 747.5,314.8" fill="none" stroke="#231a1c" stroke-width="1.7"/>
<text x="702" y="296.8" font-size="10.8" font-weight="normal" fill="#333" >X1/D0.1</text>
<line x1="650" y1="349" x2="650" y2="428.5" stroke="#231a1c" stroke-width="2" />
<line x1="650" y1="361.8" x2="704.5" y2="361.8" stroke="#231a1c" stroke-width="2.2" />
<line x1="712" y1="361.8" x2="767" y2="361.8" stroke="#231a1c" stroke-width="2.2" />
<line x1="775" y1="361.8" x2="989" y2="361.8" stroke="#231a1c" stroke-width="2.2" />
<polyline points="996.5,353.3 989,361.8 996.5,370.3" fill="none" stroke="#231a1c" stroke-width="1.6"/>
<line x1="704.5" y1="353" x2="704.5" y2="370" stroke="#231a1c" stroke-width="1.2" />
<line x1="712" y1="353" x2="712" y2="370" stroke="#231a1c" stroke-width="2.4" />
<line x1="767" y1="353" x2="767" y2="370" stroke="#231a1c" stroke-width="2.4" />
<line x1="775" y1="353" x2="775" y2="370" stroke="#231a1c" stroke-width="2.4" />
<line x1="755.0" y1="334.2" x2="810.2" y2="334.2" stroke="#231a1c" stroke-width="1" stroke-dasharray="4 3 1.5 3"/>
<line x1="755.5" y1="334.2" x2="755.5" y2="373.9" stroke="#231a1c" stroke-width="1" stroke-dasharray="4 3 1.5 3"/>
<line x1="809.7" y1="334.2" x2="809.7" y2="373.9" stroke="#231a1c" stroke-width="1" stroke-dasharray="4 3 1.5 3"/>
<line x1="755.0" y1="373.4" x2="810.2" y2="373.4" stroke="#231a1c" stroke-width="1" stroke-dasharray="4 3 1.5 3"/>
<polyline points="759.5,334.2 755.5,334.2 755.5,338.2" fill="none" stroke="#231a1c" stroke-width="1"/>
<polyline points="805.7,334.2 809.7,334.2 809.7,338.2" fill="none" stroke="#231a1c" stroke-width="1"/>
<polyline points="759.5,373.4 755.5,373.4 755.5,369.4" fill="none" stroke="#231a1c" stroke-width="1"/>
<polyline points="805.7,373.4 809.7,373.4 809.7,369.4" fill="none" stroke="#231a1c" stroke-width="1"/>
<text x="764" y="352" font-size="10.8" font-weight="normal" fill="#333" >X2/D0.2</text>
<line x1="650" y1="416" x2="704.5" y2="416" stroke="#231a1c" stroke-width="2.2" />
<line x1="712" y1="416" x2="767" y2="416" stroke="#231a1c" stroke-width="2.2" />
<line x1="775" y1="416" x2="989" y2="416" stroke="#231a1c" stroke-width="2.2" />
<polyline points="996.5,407.5 989,416 996.5,424.5" fill="none" stroke="#231a1c" stroke-width="1.6"/>
<line x1="704.5" y1="407.7" x2="704.5" y2="424.6" stroke="#231a1c" stroke-width="1.2" />
<line x1="712" y1="407.7" x2="712" y2="424.6" stroke="#231a1c" stroke-width="2.4" />
<line x1="698.4" y1="424" x2="718.2" y2="408" stroke="#231a1c" stroke-width="1.6" />
<line x1="767" y1="407.7" x2="767" y2="424.6" stroke="#231a1c" stroke-width="2.4" />
<line x1="775" y1="407.7" x2="775" y2="424.6" stroke="#231a1c" stroke-width="2.4" />
<line x1="760.6" y1="424" x2="780.4" y2="408" stroke="#231a1c" stroke-width="1.6" />
<line x1="754.65" y1="388.8" x2="810.5500000000001" y2="388.8" stroke="#231a1c" stroke-width="1.7" stroke-dasharray="7 3 2 3"/>
<line x1="755.5" y1="388.8" x2="755.5" y2="429.25" stroke="#231a1c" stroke-width="1.7" stroke-dasharray="7 3 2 3"/>
<line x1="809.7" y1="388.8" x2="809.7" y2="429.25" stroke="#231a1c" stroke-width="1.7" stroke-dasharray="7 3 2 3"/>
<line x1="754.65" y1="428.4" x2="810.5500000000001" y2="428.4" stroke="#231a1c" stroke-width="1.7" stroke-dasharray="7 3 2 3"/>
<polyline points="759.5,388.8 755.5,388.8 755.5,392.8" fill="none" stroke="#231a1c" stroke-width="1.7"/>
<polyline points="805.7,388.8 809.7,388.8 809.7,392.8" fill="none" stroke="#231a1c" stroke-width="1.7"/>
<polyline points="759.5,428.4 755.5,428.4 755.5,424.4" fill="none" stroke="#231a1c" stroke-width="1.7"/>
<polyline points="805.7,428.4 809.7,428.4 809.7,424.4" fill="none" stroke="#231a1c" stroke-width="1.7"/>
<text x="764" y="406.3" font-size="10.8" font-weight="normal" fill="#333" >X2/D0.2</text>
<line x1="650" y1="459" x2="650" y2="537" stroke="#231a1c" stroke-width="2" />
<line x1="650" y1="471" x2="704.3" y2="471" stroke="#231a1c" stroke-width="2.2" />
<line x1="711.7" y1="471" x2="989" y2="471" stroke="#231a1c" stroke-width="2.2" />
<polyline points="996.5,462.5 989,471 996.5,479.5" fill="none" stroke="#231a1c" stroke-width="1.6"/>
<line x1="704.3" y1="463.2" x2="704.3" y2="478.6" stroke="#231a1c" stroke-width="1.2" />
<line x1="711.7" y1="463.2" x2="711.7" y2="478.6" stroke="#231a1c" stroke-width="2.4" />
<line x1="740.2" y1="471" x2="740.2" y2="526.5" stroke="#231a1c" stroke-width="2.4" />
<line x1="650" y1="525.5" x2="704.3" y2="525.5" stroke="#231a1c" stroke-width="3" />
<line x1="711.7" y1="525.5" x2="741.4" y2="525.5" stroke="#231a1c" stroke-width="3" />
<line x1="704.3" y1="517.2" x2="704.3" y2="533.6" stroke="#231a1c" stroke-width="2.6" />
<line x1="711.7" y1="517.2" x2="711.7" y2="533.6" stroke="#231a1c" stroke-width="2.4" />
<line x1="640.9499999999999" y1="497.8" x2="748.45" y2="497.8" stroke="#231a1c" stroke-width="1.7" stroke-dasharray="7 3 2 3"/>
<line x1="641.8" y1="497.8" x2="641.8" y2="537.35" stroke="#231a1c" stroke-width="1.7" stroke-dasharray="7 3 2 3"/>
<line x1="747.6" y1="497.8" x2="747.6" y2="537.35" stroke="#231a1c" stroke-width="1.7" stroke-dasharray="7 3 2 3"/>
<line x1="640.9499999999999" y1="536.5" x2="748.45" y2="536.5" stroke="#231a1c" stroke-width="1.7" stroke-dasharray="7 3 2 3"/>
<polyline points="645.8,497.8 641.8,497.8 641.8,501.8" fill="none" stroke="#231a1c" stroke-width="1.7"/>
<polyline points="743.6,497.8 747.6,497.8 747.6,501.8" fill="none" stroke="#231a1c" stroke-width="1.7"/>
<polyline points="645.8,536.5 641.8,536.5 641.8,532.5" fill="none" stroke="#231a1c" stroke-width="1.7"/>
<polyline points="743.6,536.5 747.6,536.5 747.6,532.5" fill="none" stroke="#231a1c" stroke-width="1.7"/>
<text x="696" y="515" font-size="10.8" font-weight="normal" fill="#333" >X3/D0.3</text></svg>
<!--DOC_END-->
<!--WIN_END-->

<svg class="a" style="left:0;top:0" width="1008" height="707"><path d="M591.3,614.8 C583,612 570,609.6 558.9,609.6 C550,609.6 546,610.5 543,611.6 C537,614 533,617 529.6,619.6 C526,624 524.5,628 524,631.4 C521.5,638 520.5,643 520,647.3 C519,655 518.5,660 518.5,664.7 C518.5,671 519,676 520,680.5 C523,687 526,690 530.3,693.2 C537,698 543,700.5 549.4,702.7 C557,705 565,706.5 573.1,706.7 C581,706.8 587,705.5 593.7,704.3 C601,702 609,700 615.9,698 C620,696.5 623,695.5 625.4,694.8 C627,693.5 627,691.5 627,690 C631,684 634,680 636.5,675.8 C638,669 638.2,663 638,658.4 C637.5,652 636.8,647 635.7,642.5 C634,637 632.5,634 630.1,631.4 C626,628 622,626 617.5,624.3 C612,622.5 606,621.5 600,621.1 C592,620.5 585,620.3 577.1,620.3" fill="none" stroke="#0a1ae6" stroke-width="2" stroke-linecap="round"/></svg>
</body></html>
